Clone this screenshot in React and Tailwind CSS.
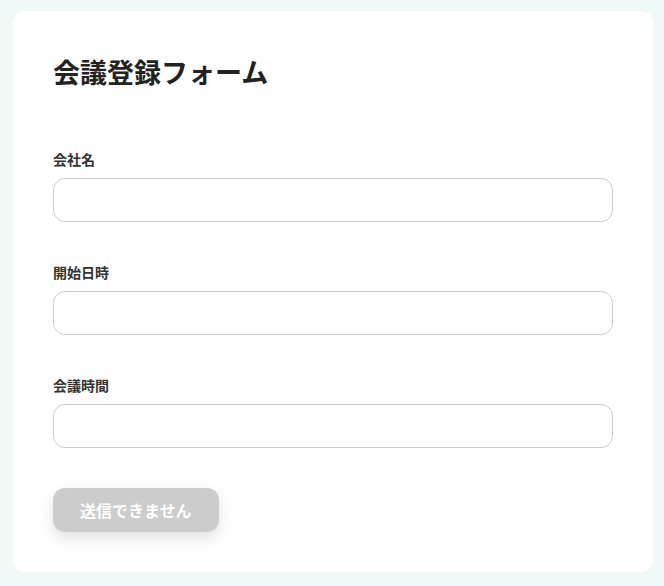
export default function App() {
  const fields = ['会社名', '開始日時', '会議時間'];

  return (
    <div
      className="min-h-[586px] bg-[#f0f9f8] pt-[11px] pl-[13px] pr-[11px] pb-[14px]"
      style={{ fontFamily: '"Noto Sans CJK JP", "Noto Sans", sans-serif' }}
    >
      <div className="bg-white rounded-xl p-10">
        <h1 className="text-[27px] leading-[42px] font-bold text-[#222] mb-[57px]">
          会議登録フォーム
        </h1>

        {fields.map((label, i) => (
          <div key={label} className={i === fields.length - 1 ? 'mb-10' : 'mb-[41px]'}>
            <label className="block text-sm leading-[18px] font-bold text-[#333] mb-[10px]">
              {label}
            </label>
            <input
              type="text"
              className="block w-full h-11 rounded-xl border border-[#cccccc] bg-white px-3 outline-none"
            />
          </div>
        ))}

        <button
          disabled
          className="h-11 px-[27px] rounded-xl bg-[#cccccc] text-white text-base font-bold shadow-[0_6px_16px_rgba(0,0,0,0.12)]"
        >
          送信できません
        </button>
      </div>
    </div>
  );
}
